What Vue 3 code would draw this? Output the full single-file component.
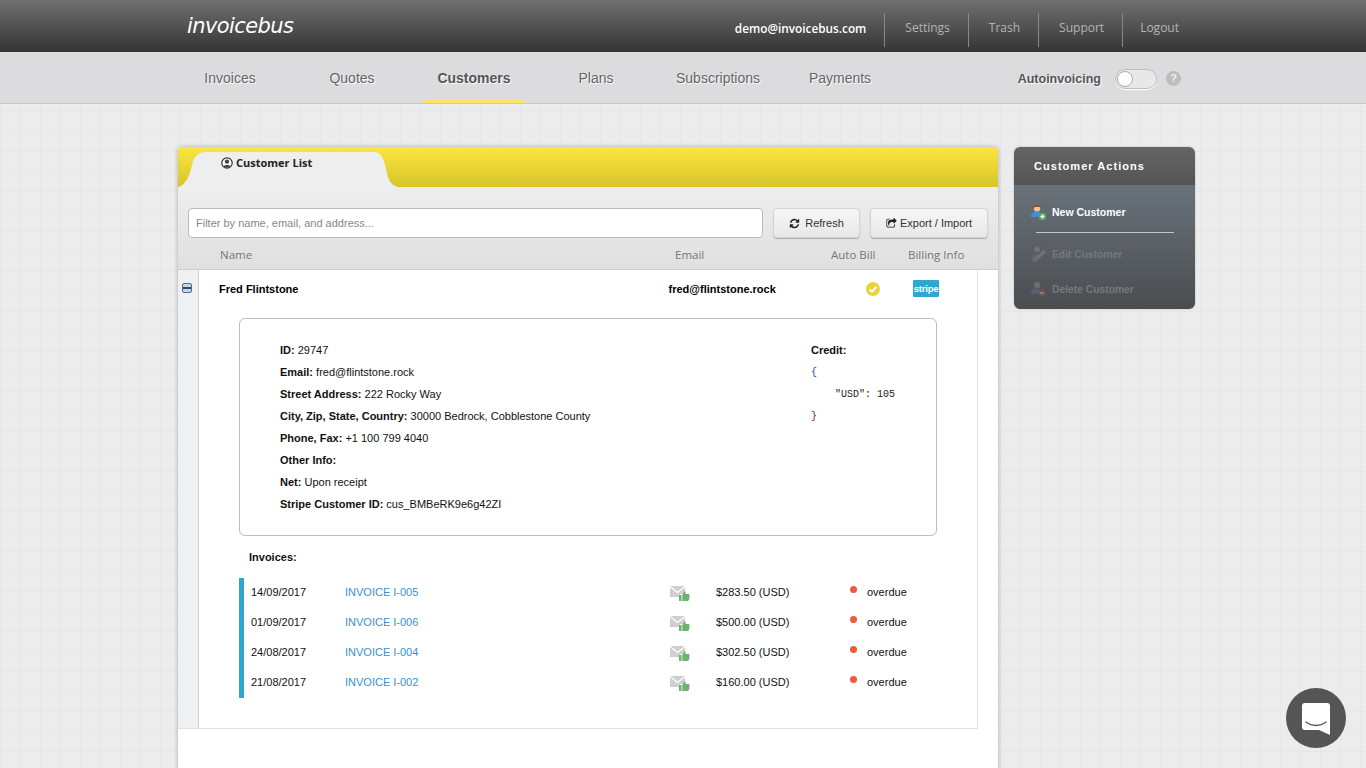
<script setup>
const navs = [
  { label: 'Invoices' }, { label: 'Quotes' }, { label: 'Customers', active: true },
  { label: 'Plans' }, { label: 'Subscriptions' }, { label: 'Payments' },
]
const links = ['Settings', 'Trash', 'Support', 'Logout']
const details = [
  ['ID:', '29747'],
  ['Email:', 'fred@flintstone.rock'],
  ['Street Address:', '222 Rocky Way'],
  ['City, Zip, State, Country:', '30000 Bedrock, Cobblestone County'],
  ['Phone, Fax:', '+1 100 799 4040'],
  ['Other Info:', ''],
  ['Net:', 'Upon receipt'],
  ['Stripe Customer ID:', 'cus_BMBeRK9e6g42ZI'],
]
const invoices = [
  ['14/09/2017', 'INVOICE I-005', '$283.50 (USD)'],
  ['01/09/2017', 'INVOICE I-006', '$500.00 (USD)'],
  ['24/08/2017', 'INVOICE I-004', '$302.50 (USD)'],
  ['21/08/2017', 'INVOICE I-002', '$160.00 (USD)'],
]
</script>

<template>
  <div class="page">
    <header class="top">
      <div class="logo">invoicebus</div>
      <div class="top-right">
        <span class="mail">demo@invoicebus.com</span>
        <a v-for="l in links" :key="l" class="top-link">{{ l }}</a>
      </div>
    </header>

    <nav class="nav">
      <div class="nav-items">
        <a v-for="n in navs" :key="n.label" class="nav-item" :class="{ active: n.active }">{{ n.label }}</a>
      </div>
      <div class="auto">
        <span class="auto-label">Autoinvoicing</span>
        <span class="toggle"><span class="knob"></span></span>
        <span class="help">?</span>
      </div>
    </nav>

    <main class="main">
      <section class="card">
        <div class="card-top">
          <svg class="tab-shape" width="226" height="40" viewBox="0 0 226 40">
            <path d="M0 40 C8 38 12 28 14 18 C16 9 20 5 28 5 L196 5 C203 5 206 12 208 22 C210 32 212 38 220 40 Z" fill="#eeeeee" />
          </svg>
          <div class="tab-label">
            <svg width="12" height="12" viewBox="0 0 12 12">
              <circle cx="6" cy="6" r="5.2" fill="#fff" stroke="#333" stroke-width="1.2" />
              <circle cx="6" cy="4.6" r="2.2" fill="#444" />
              <path d="M2.2 9.6 C3 7.4 9 7.4 9.8 9.6 C8.6 11 3.4 11 2.2 9.6Z" fill="#444" />
            </svg>
            <span>Customer List</span>
          </div>
        </div>

        <div class="tools">
          <div class="toolbar">
            <input class="filter" placeholder="Filter by name, email, and address..." />
            <button class="btn refresh">
              <svg width="11" height="11" viewBox="0 0 1792 1792"><path fill="#222" d="M1639 1056q0 5-1 7-64 268-268 434.5t-478 166.5q-146 0-282.5-55t-243.5-157l-129 129q-19 19-45 19t-45-19-19-45v-448q0-26 19-45t45-19h448q26 0 45 19t19 45-19 45l-137 137q71 66 161 102t187 36q134 0 250-65t186-179q11-17 53-117 8-23 30-23h192q13 0 22.5 9.5t9.5 22.5zm25-800v448q0 26-19 45t-45 19h-448q-26 0-45-19t-19-45 19-45l138-138q-148-137-349-137-134 0-250 65t-186 179q-11 17-53 117-8 23-30 23h-199q-13 0-22.5-9.5t-9.5-22.5v-7q65-268 270-434.5t480-166.5q146 0 284 55.5t245 156.5l130-129q19-19 45-19t45 19 19 45z"/></svg>
              Refresh
            </button>
            <button class="btn export">
              <svg width="11" height="11" viewBox="0 0 1792 1792"><path fill="#222" d="M1472 989v259q0 119-84.5 203.5t-203.5 84.5h-832q-119 0-203.5-84.5t-84.5-203.5v-832q0-119 84.5-203.5t203.5-84.5h255q13 0 22.5 9.5t9.5 22.5q0 27-26 32-77 26-133 60-10 4-16 4h-112q-66 0-113 47t-47 113v832q0 66 47 113t113 47h832q66 0 113-47t47-113v-214q0-19 18-29 28-13 54-37 16-16 35-8 21 9 21 29zm237-496l-384 384q-18 19-45 19-12 0-25-5-39-17-39-59v-192h-160q-323 0-438 131-119 137-74 473 3 23-20 34-8 2-12 2-16 0-26-13-10-14-21-31t-39.5-68.5-49.5-99.5-38.5-114-17.5-122q0-49 3.5-91t14-90 28-88 47-81.5 68.5-74 94.5-61.5 124.5-48.5 159.5-30.5 196.5-11h160v-192q0-42 39-59 13-5 25-5 26 0 45 19l384 384q19 19 19 45t-19 45z"/></svg>
              Export / Import
            </button>
          </div>
          <div class="cols">
            <span class="c-name">Name</span>
            <span class="c-email">Email</span>
            <span class="c-auto">Auto Bill</span>
            <span class="c-bill">Billing Info</span>
          </div>
        </div>

        <div class="table">
          <div class="gutter"><span class="minus"></span></div>
          <div class="content">
            <div class="row">
              <span class="r-name">Fred Flintstone</span>
              <span class="r-email">fred@flintstone.rock</span>
              <span class="r-auto">
                <svg width="14" height="14" viewBox="0 0 14 14">
                  <circle cx="7" cy="7" r="7" fill="#e8d339" />
                  <path d="M3.6 7.2 L6 9.6 L10.4 5" fill="none" stroke="#fff" stroke-width="2" />
                </svg>
              </span>
              <span class="stripe">stripe</span>
            </div>

            <div class="box">
              <div class="info">
                <div v-for="d in details" :key="d[0]" class="line"><b>{{ d[0] }}</b> {{ d[1] }}</div>
              </div>
              <div class="credit">
                <div class="line"><b>Credit:</b></div>
                <pre class="json"><span class="blue">{</span>
    "USD": 105
<span class="red">}</span></pre>
              </div>
            </div>

            <div class="inv-title">Invoices:</div>
            <div class="inv-list">
              <div v-for="i in invoices" :key="i[1]" class="inv">
                <span class="i-date">{{ i[0] }}</span>
                <a class="i-link">{{ i[1] }}</a>
                <span class="i-icon">
                  <svg width="20" height="17" viewBox="0 0 20 17">
                    <path d="M0 1 L15 1 L15 9 L10 9 L10 12 L0 12 Z" fill="#cfcfcf" />
                    <path d="M0 1.5 L7.5 7.5 L15 1.5" fill="none" stroke="#fff" stroke-width="1.3" />
                    <path d="M9 10 H11.5 V16 H9 Z M12.3 10 L14.5 6.2 C15.6 6.2 15.9 7.2 15.5 9 L19 9 C20 9.4 19.6 15.6 18 16 L12.3 16 Z" fill="#6fb26f" />
                  </svg>
                </span>
                <span class="i-amt">{{ i[2] }}</span>
                <span class="dot"></span>
                <span class="i-status">overdue</span>
              </div>
            </div>
          </div>
        </div>
      </section>

      <aside class="side">
        <div class="side-head">Customer Actions</div>
        <div class="side-body">
          <div class="act on">
            <svg width="16" height="16" viewBox="0 0 16 16">
              <circle cx="7" cy="4.4" r="3.2" fill="#f2c09a" />
              <path d="M3.4 4 C3 0 10.8 -0.2 10.6 3.6 C8.6 2.4 6 2.4 3.4 4Z" fill="#8a4b22" />
              <path d="M1 13 C1 8.6 4 7.8 7 7.8 C10 7.8 12.6 8.6 12.6 13 Z" fill="#3f8fe0" />
              <rect x="9" y="9" width="7" height="7" rx="1.6" fill="#5aa845" />
              <path d="M12.5 10.4 V14.6 M10.4 12.5 H14.6" stroke="#fff" stroke-width="1.5" />
            </svg>
            <span>New Customer</span>
          </div>
          <div class="rule"></div>
          <div class="act off">
            <svg width="16" height="16" viewBox="0 0 16 16">
              <circle cx="7" cy="3.6" r="3" fill="#8a7f74" />
              <path d="M0.6 13 C1 9 4 7.6 7 7.6 L8 13 Z" fill="#55708c" />
              <path d="M3 13.4 L13.6 3.6 L16 6.4 L6 15.6 L3.4 15.8 Z" fill="#8c7f6c" />
            </svg>
            <span>Edit Customer</span>
          </div>
          <div class="act off">
            <svg width="16" height="16" viewBox="0 0 16 16">
              <circle cx="7" cy="4" r="3.2" fill="#8a7f74" />
              <path d="M1 13 C1 8.6 4 7.8 7 7.8 C10 7.8 12.6 8.6 12.6 13 Z" fill="#55708c" />
              <circle cx="12" cy="12" r="3.4" fill="#8a5a48" />
              <path d="M10 12 H14" stroke="#c9c0b8" stroke-width="1.3" />
            </svg>
            <span>Delete Customer</span>
          </div>
        </div>
      </aside>
    </main>

    <div class="chat">
      <svg width="28" height="32" viewBox="0 0 28 32">
        <path d="M3 0 H25 A3 3 0 0 1 28 3 V32 L17 27 H3 A3 3 0 0 1 0 24 V3 A3 3 0 0 1 3 0Z" fill="#fff" />
        <path d="M4 19 C10 23.6 18 23.6 24 19" fill="none" stroke="#555" stroke-width="1.4" stroke-linecap="round" />
      </svg>
    </div>
  </div>
</template>

<style>
html, body { margin: 0; overflow: hidden; }
</style>

<style scoped>
.page {
  height: 768px;
  overflow: hidden;
  display: flex;
  flex-direction: column;
  font-family: "Liberation Sans", Arial, sans-serif;
  background-color: #ececec;
}
.top {
  height: 52px;
  flex: none;
  box-sizing: border-box;
  padding: 0 187px 0 187px;
  display: flex;
  align-items: center;
  justify-content: space-between;
  background: linear-gradient(#707070, #343434);
}
.logo {
  font-family: "DejaVu Sans", sans-serif;
  font-style: italic;
  font-size: 21px;
  letter-spacing: -0.6px;
  color: #fff;
  margin-top: 0;
}
.top-right {
  display: flex;
  align-items: center;
  font-family: "Open Sans", sans-serif;
  font-size: 12px;
  padding-top: 8px;
}
.mail {
  color: #fff;
  font-weight: 600;
  font-size: 11.8px;
  padding-right: 18px;
  margin-top: -5px;
}
.top-link {
  color: #b4b4b4;
  height: 34px;
  line-height: 30px;
  padding: 0 18px 0 20px;
  border-left: 1px solid #888;
}
.top-link:last-child { padding-right: 0; padding-left: 17px; }
.nav {
  height: 52px;
  flex: none;
  box-sizing: border-box;
  border-bottom: 1px solid #c8c8c8;
  background: #dcdcde;
  display: flex;
  justify-content: space-between;
  padding: 0 185px 0 169px;
}
.nav-items { display: flex; }
.nav-item {
  width: 122px;
  text-align: center;
  font-size: 14px;
  line-height: 52px;
  color: #666;
  text-shadow: 1px 1px 1px #fff;
  position: relative;
}
.nav-item.active { font-weight: 700; color: #555; }
.nav-item.active::after {
  content: "";
  position: absolute;
  left: 11px;
  right: 11px;
  bottom: 0;
  height: 4px;
  background: #fde469;
}
.auto { display: flex; align-items: center; padding-top: 2px; }
.auto-label {
  font-size: 12.5px;
  font-weight: 700;
  color: #555;
  text-shadow: 1px 1px 1px #fff;
  margin-right: 14px;
}
.toggle {
  width: 40px;
  height: 18px;
  border: 1px solid #bdbdbd;
  border-radius: 10px;
  background: #e8e8e8;
  box-shadow: 0 1px 1px #fff;
  display: flex;
  align-items: center;
}
.knob {
  width: 16px;
  height: 16px;
  border-radius: 50%;
  background: #fff;
  border: 1px solid #aaa;
  box-sizing: border-box;
  margin-left: 1px;
}
.help {
  width: 15px;
  height: 15px;
  margin-left: 9px;
  border-radius: 50%;
  background: #bdbdbd;
  color: #eee;
  font-size: 11px;
  font-weight: 700;
  line-height: 15px;
  text-align: center;
}
.main {
  flex: 1;
  min-height: 0;
  box-sizing: border-box;
  padding: 43px 0 0 178px;
  display: flex;
  align-items: flex-start;
  gap: 16px;
  background-color: #ececec;
  background-image:
    linear-gradient(#e7e7e7 1px, transparent 1px),
    linear-gradient(90deg, #e7e7e7 1px, transparent 1px);
  background-size: 20px 20px;
  background-position: 0 7px;
}
.card {
  width: 820px;
  height: 640px;
  flex: none;
  background: #fff;
  border-radius: 4px 4px 0 0;
  box-shadow: 0 0 4px rgba(0, 0, 0, 0.3);
}
.card-top {
  height: 40px;
  position: relative;
  border-radius: 4px 4px 0 0;
  background: linear-gradient(#fce53f, #d7c52c);
  overflow: hidden;
}
.tab-shape { position: absolute; left: 0; top: 0; }
.tab-label {
  position: relative;
  display: flex;
  align-items: center;
  gap: 3px;
  padding: 8px 0 0 43px;
  font-family: "Open Sans", sans-serif;
  font-size: 11px;
  font-weight: 700;
  color: #222;
}
.tools {
  height: 83px;
  box-sizing: border-box;
  padding-top: 21px;
  background: linear-gradient(#eeeeee, #e0e0e0);
  border-bottom: 1px solid #cfcfcf;
}
.toolbar {
  display: flex;
  gap: 10px;
  padding: 0 10px;
}
.filter {
  width: 575px;
  height: 30px;
  box-sizing: border-box;
  border: 1px solid #bbb;
  border-radius: 4px;
  padding: 0 7px;
  font-family: "Liberation Sans", sans-serif;
  font-size: 11px;
  background: #fff;
  outline: none;
}
.filter::placeholder { color: #888; opacity: 1; }
.btn {
  height: 30px;
  box-sizing: border-box;
  border: 1px solid #d4d4d4;
  border-radius: 4px;
  background: linear-gradient(#f6f6f6, #e8e8e8);
  box-shadow: 0 1px 1px rgba(0, 0, 0, 0.25);
  font-family: "Liberation Sans", sans-serif;
  font-size: 11px;
  color: #333;
  display: flex;
  align-items: center;
  justify-content: center;
  gap: 5px;
  padding: 0;
}
.refresh { width: 87px; }
.export { width: 118px; gap: 3px; }
.cols {
  position: relative;
  height: 25px;
  margin-top: 6px;
  font-family: "Open Sans", sans-serif;
  font-size: 11.5px;
  line-height: 22px;
  color: #777;
  display: grid;
  grid-template-columns: 42px 455px 156px 77px auto;
}
.c-name { grid-column: 2; }
.c-email { grid-column: 3; }
.c-auto { grid-column: 4; }
.c-bill { grid-column: 5; }
.table {
  display: flex;
  width: 800px;
  height: 459px;
  box-sizing: border-box;
  border-bottom: 1px solid #e2e2e2;
  border-right: 1px solid #e2e2e2;
}
.gutter {
  width: 21px;
  flex: none;
  box-sizing: border-box;
  background: #eef0f2;
  border-right: 1px solid #d0d0d0;
  padding: 13px 0 0 4px;
}
.minus {
  display: block;
  width: 10px;
  height: 10px;
  box-sizing: border-box;
  border: 1px solid #4a6a90;
  border-radius: 2px;
  background: linear-gradient(#c6d3e2 0 3px, #2f4a68 3px 5px, #c6d3e2 5px);
}
.content { flex: 1; min-width: 0; }
.row {
  height: 38px;
  margin-bottom: 10px;
  display: grid;
  grid-template-columns: 20px 450px 197px 47px 26px;
  align-items: center;
  font-size: 11px;
  font-weight: 700;
  color: #000;
}
.r-name { grid-column: 2; }
.r-email { grid-column: 3; margin-left: -0.5px; }
.r-auto { grid-column: 4; display: flex; }
.stripe {
  grid-column: 5;
  height: 17px;
  margin-top: -1px;
  background: #2ea7d2;
  border-radius: 1px;
  color: #fff;
  font-size: 9.5px;
  font-weight: 700;
  line-height: 17px;
  text-align: center;
  letter-spacing: -0.2px;
}
.box {
  width: 698px;
  height: 218px;
  margin-left: 40px;
  box-sizing: border-box;
  border: 1px solid #bdbdbd;
  border-radius: 6px;
  padding: 20px 40px;
  display: flex;
  justify-content: space-between;
  font-size: 11px;
  color: #111;
}
.line { height: 22px; line-height: 22px; }
.credit { width: 85px; }
.json {
  margin: 1px 0 0;
  font-family: "Liberation Mono", monospace;
  font-size: 10px;
  line-height: 22px;
  color: #222;
}
.blue { color: #1e4f9a; }
.red { color: #8b1a1a; }
.inv-title {
  margin: 14px 0 0 50px;
  font-size: 11px;
  font-weight: 700;
  line-height: 14px;
  color: #111;
}
.inv-list {
  margin: 14px 0 0 40px;
  border-left: 5px solid #2ea7d2;
}
.inv {
  height: 30px;
  display: grid;
  grid-template-columns: 7px 94px 325px 46px 134px 17px auto;
  align-items: center;
  font-size: 11px;
  color: #111;
}
.i-date { grid-column: 2; margin-top: -2px; }
.i-link { color: #3b8fd1; margin-top: -2px; }
.i-amt, .i-status { margin-top: -2px; }
.i-icon { display: flex; margin-top: 1px; }
.dot {
  width: 7px;
  height: 7px;
  border-radius: 50%;
  background: #ee5a3b;
  margin-top: -8px;
}
.side {
  width: 181px;
  flex: none;
  border-radius: 6px;
  overflow: hidden;
  box-shadow: 0 0 2px rgba(0, 0, 0, 0.25);
}
.side-head {
  height: 38px;
  box-sizing: border-box;
  padding-left: 20px;
  line-height: 38px;
  background: linear-gradient(#656565, #545454);
  color: #fff;
  font-size: 11px;
  font-weight: 700;
  letter-spacing: 1.04px;
}
.side-body {
  height: 124px;
  box-sizing: border-box;
  padding-top: 19px;
  background: linear-gradient(#69727a, #4a4d50);
}
.act {
  height: 16px;
  display: flex;
  align-items: center;
  gap: 6px;
  padding-left: 16px;
  font-size: 10.5px;
  font-weight: 700;
}
.act.on { color: #fff; }
.act.off { color: #75797d; margin-top: 19px; font-size: 10.3px; }
.act.off svg { opacity: 0.55; }
.rule {
  height: 1px;
  margin: 12px 21px 0 22px;
  background: #c4c6c8;
}
.rule + .act { margin-top: 13px; }
.chat {
  position: fixed;
  left: 1286px;
  top: 688px;
  width: 60px;
  height: 60px;
  border-radius: 50%;
  background: #555;
  display: flex;
  align-items: center;
  justify-content: center;
}
.chat svg { margin-top: 2px; }
</style>
